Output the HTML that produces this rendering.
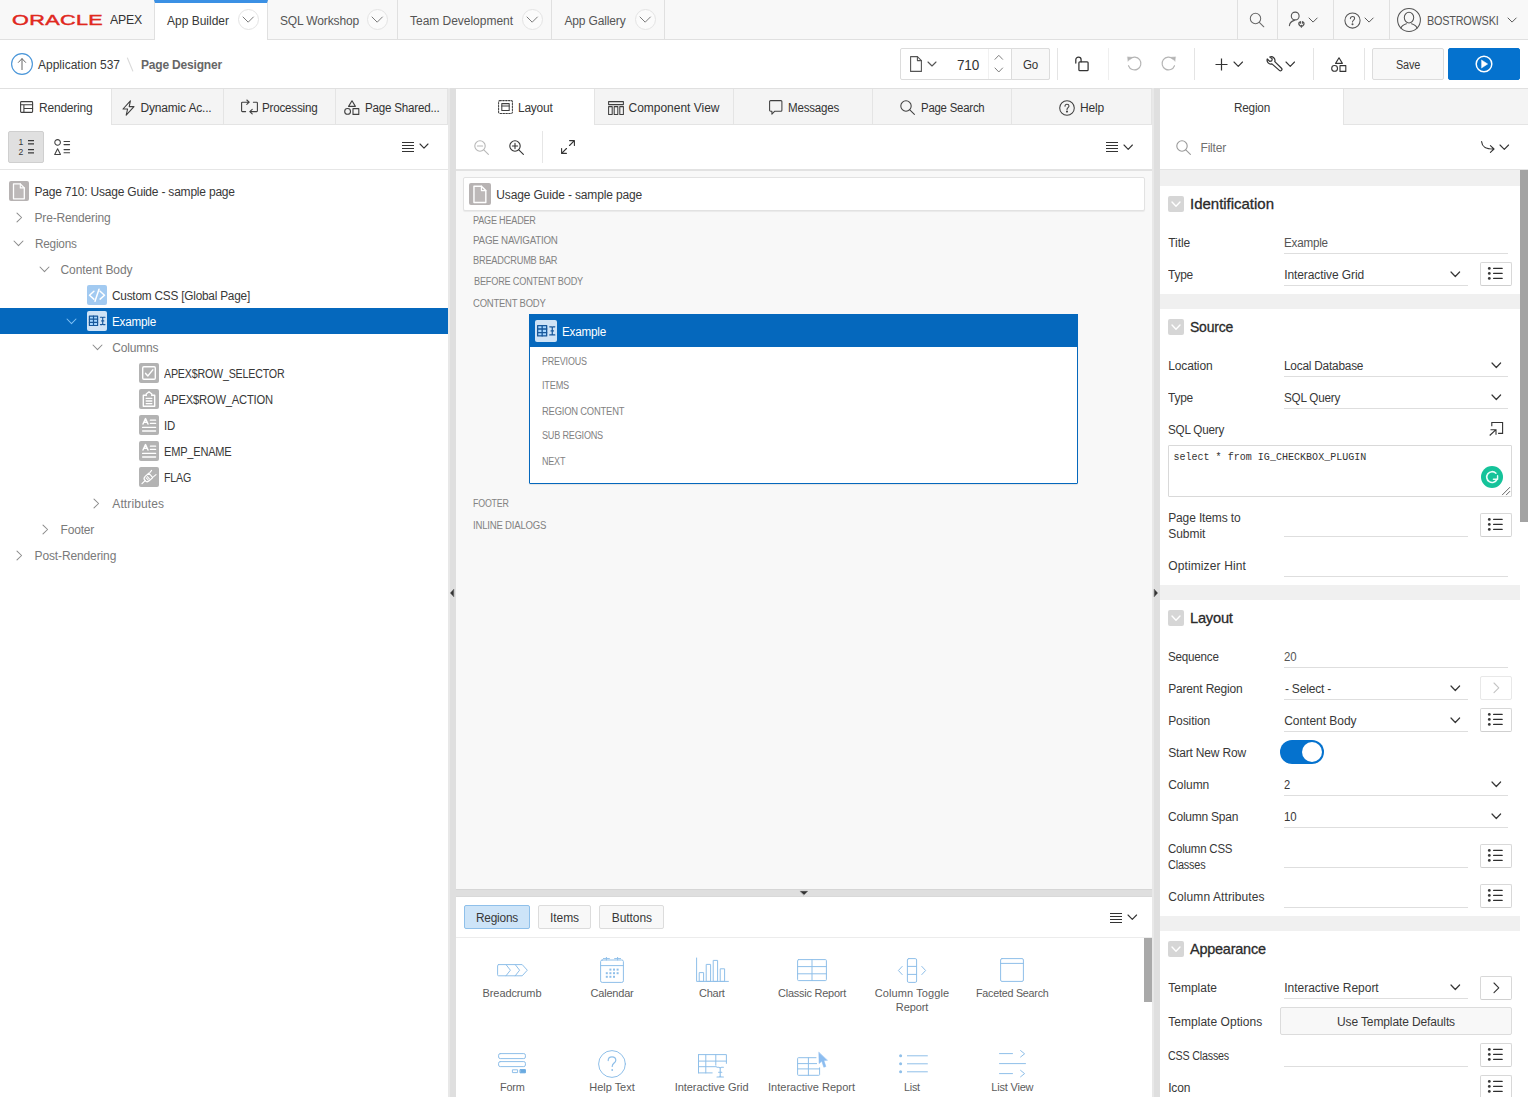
<!DOCTYPE html>
<html lang="en">
<head>
<meta charset="utf-8">
<title>Page Designer</title>
<style>
*{box-sizing:border-box;margin:0;padding:0}
html,body{width:1528px;height:1097px;overflow:hidden;background:#fff}
body{font-family:"Liberation Sans",sans-serif;font-size:12px;color:#333;position:relative}
.abs,.t,svg.i{position:absolute}
.t{white-space:pre;display:block}
svg.i{overflow:visible;fill:none;stroke:#404040;stroke-width:1.1;stroke-linecap:round;stroke-linejoin:round}
.box{position:absolute}
#hdr{left:0;top:0;width:1528px;height:40px;background:#f8f8f8;border-bottom:1px solid #e0e0e0}
.vsep{position:absolute;width:1px;background:#e0e0e0}
.hsep{position:absolute;height:1px;background:#e0e0e0}
.circ{position:absolute;border:1px solid #e0e0e0;border-radius:50%}
#tb{left:0;top:40px;width:1528px;height:48px;background:#fff}
.btn{position:absolute;border:1px solid #dcdcdc;border-radius:2px;background:#f8f8f8}
.panel{position:absolute;top:88px;height:1009px;background:#fff;overflow:hidden}
.tabs{position:absolute;left:0;top:0;height:37px;background:#f4f4f4;border-top:1px solid #e0e0e0;border-bottom:1px solid #e4e4e4}
.tab{position:absolute;top:0;height:35px;border-right:1px solid #e4e4e4}
.tab.on{background:#fff;height:36px;border-right:1px solid #e4e4e4}
.split{position:absolute;top:88px;width:8px;height:1009px;background:#dfdfdf;border-left:2px solid #e8e8e8}
.ico20{position:absolute;width:20px;height:20px;border-radius:2px;background:#b9b9b9}
.ico20 svg{position:absolute;left:0;top:0;width:20px;height:20px;fill:none;stroke:#fff;stroke-width:1.2;stroke-linejoin:round;stroke-linecap:round}
.sec{position:absolute;left:0;width:360px;background:#fff}
.tog{position:absolute;left:8px;width:16px;height:16px;border-radius:2px;background:#d6d6d6}
.ul{position:absolute;height:1px;background:#dedede}
.lb{position:absolute;width:32px;height:24px;border:1px solid #d8d8d8;border-bottom-color:#cfcfcf;border-radius:2px;background:#fff}
</style>
</head>
<body>
<header id="hdr" class="abs">
<span class="t" style="left:12.0px;top:11.0px;font-size:14.5px;line-height:18px;color:#e0281e;letter-spacing:0.000px;transform-origin:0 50%;transform:scaleX(1.49);letter-spacing:0.25px;-webkit-text-stroke:0.45px #e0281e;">ORACLE</span>
<span class="t" style="left:110.0px;top:10.5px;font-size:13px;line-height:18px;color:#333;letter-spacing:-0.220px;transform-origin:0 50%;transform:scaleX(0.9465);">APEX</span>
<div class="box" style="left:154px;top:0px;width:114px;height:40px;background:#fff;border-left:1px solid #e0e0e0;border-right:1px solid #e0e0e0;border-top:3px solid #3b90e4"></div>
<span class="t" style="left:167.0px;top:12.5px;font-size:12px;line-height:16px;color:#383838;letter-spacing:-0.004px;">App Builder</span>
<span class="t" style="left:280.0px;top:12.5px;font-size:12px;line-height:16px;color:#555;letter-spacing:-0.142px;">SQL Workshop</span>
<div class="vsep" style="left:397px;top:0;height:39px"></div>
<span class="t" style="left:410.0px;top:12.5px;font-size:12px;line-height:16px;color:#555;letter-spacing:-0.024px;">Team Development</span>
<div class="vsep" style="left:551px;top:0;height:39px"></div>
<span class="t" style="left:564.5px;top:12.5px;font-size:12px;line-height:16px;color:#555;letter-spacing:-0.155px;">App Gallery</span>
<div class="vsep" style="left:664px;top:0;height:39px"></div>
<div class="circ" style="left:237.5px;top:8.8px;width:21px;height:21px;background:#fff;border-color:#e4e4e4"></div>
<svg class="i" style="left:243.2px;top:16.6px;stroke:#7a7a7a;stroke-width:1;" width="10.4" height="5.2" viewBox="0 0 10.4 5.2"><path d="M0 0L5.2 5.2L10.4 0"/></svg>
<div class="circ" style="left:366.5px;top:8.8px;width:21px;height:21px;background:#fbfbfb;border-color:#e4e4e4"></div>
<svg class="i" style="left:372.2px;top:16.6px;stroke:#7a7a7a;stroke-width:1;" width="10.4" height="5.2" viewBox="0 0 10.4 5.2"><path d="M0 0L5.2 5.2L10.4 0"/></svg>
<div class="circ" style="left:521.5px;top:8.8px;width:21px;height:21px;background:#fbfbfb;border-color:#e4e4e4"></div>
<svg class="i" style="left:527.2px;top:16.6px;stroke:#7a7a7a;stroke-width:1;" width="10.4" height="5.2" viewBox="0 0 10.4 5.2"><path d="M0 0L5.2 5.2L10.4 0"/></svg>
<div class="circ" style="left:634.5px;top:8.8px;width:21px;height:21px;background:#fbfbfb;border-color:#e4e4e4"></div>
<svg class="i" style="left:640.2px;top:16.6px;stroke:#7a7a7a;stroke-width:1;" width="10.4" height="5.2" viewBox="0 0 10.4 5.2"><path d="M0 0L5.2 5.2L10.4 0"/></svg>
<div class="vsep" style="left:1237px;top:0;height:39px"></div>
<div class="vsep" style="left:1277px;top:0;height:39px"></div>
<div class="vsep" style="left:1333px;top:0;height:39px"></div>
<div class="vsep" style="left:1389px;top:0;height:39px"></div>
<svg class="i" style="left:1249px;top:12px;stroke:#6a6a6a;stroke-width:1.05;" width="16" height="16" viewBox="0 0 16 16"><circle cx="6.5" cy="6.5" r="5.2"/><path d="M10.3 10.3L14.8 14.8"/></svg>
<svg class="i" style="left:1288px;top:11px;stroke:#555;stroke-width:1.1;" width="19" height="18" viewBox="0 0 19 18"><circle cx="7.2" cy="5" r="3.9"/><path d="M1.4 14.6c0.4-2.8 2.4-4.6 5-5.2"/><path d="M11.4 11.2a2.5 2.5 0 1 0 4 0M12.4 10.6v1.6M14.4 10.6v1.6M13.4 14.4v1.8" stroke-width="1.2"/></svg>
<svg class="i" style="left:1308.9px;top:17.75px;stroke:#5a5a5a;stroke-width:1;" width="8.2" height="4.1" viewBox="0 0 8.2 4.1"><path d="M0 0L4.1 4.1L8.2 0"/></svg>
<svg class="i" style="left:1344px;top:11.5px;stroke:#555;stroke-width:1.05;" width="17" height="17" viewBox="0 0 17 17"><circle cx="8.5" cy="8.5" r="7.6"/><path d="M6.4 6.6c0-1.3 0.9-2.1 2.1-2.1s2.1 0.8 2.1 1.9c0 1.6-2.1 1.8-2.1 3.6"/><circle cx="8.5" cy="12.3" r="0.5" fill="#555"/></svg>
<svg class="i" style="left:1364.9px;top:17.75px;stroke:#5a5a5a;stroke-width:1;" width="8.2" height="4.1" viewBox="0 0 8.2 4.1"><path d="M0 0L4.1 4.1L8.2 0"/></svg>
<svg class="i" style="left:1397px;top:8px;stroke:#555;stroke-width:1.05;" width="24" height="24" viewBox="0 0 24 24"><circle cx="12" cy="12" r="11.4"/><ellipse cx="12" cy="9.6" rx="4.7" ry="5.3"/><path d="M4 20.2c0.6-2.4 2.6-3.4 5.4-4.4M20 20.2c-0.6-2.4-2.6-3.4-5.4-4.4"/></svg>
<span class="t" style="left:1427.0px;top:12.5px;font-size:12px;line-height:16px;color:#555;letter-spacing:-0.220px;transform-origin:0 50%;transform:scaleX(0.9034);">BOSTROWSKI</span>
<svg class="i" style="left:1507.9px;top:17.75px;stroke:#5a5a5a;stroke-width:1;" width="8.2" height="4.1" viewBox="0 0 8.2 4.1"><path d="M0 0L4.1 4.1L8.2 0"/></svg>
</header>
<div id="tb" class="abs">
<svg class="i" style="left:10.8px;top:13px;stroke-width:1.1;" width="22" height="22" viewBox="0 0 22 22"><circle cx="11" cy="11" r="10.4" stroke="#4a96d9" stroke-width="1.15"/><path d="M11 16.6V5.8M7.4 9.4L11 5.6L14.6 9.4" stroke="#666" stroke-width="1"/></svg>
<span class="t" style="left:38.0px;top:16.5px;font-size:12px;line-height:16px;color:#383838;letter-spacing:-0.004px;">Application 537</span>
<svg class="i" style="left:126px;top:17px;stroke:#dadada;stroke-width:1.1;" width="8" height="15" viewBox="0 0 8 15"><path d="M1.4 1L6.8 14"/></svg>
<span class="t" style="left:141.0px;top:16.5px;font-size:12px;line-height:16px;color:#666;letter-spacing:-0.183px;font-weight:700;">Page Designer</span>
<div class="btn" style="left:900px;top:8px;width:150px;height:32px;background:#fff"></div>
<div class="btn" style="left:1011px;top:8px;width:39px;height:32px;border-radius:0 2px 2px 0"></div>
<div class="vsep" style="left:988px;top:9px;height:30px;background:#f1f1f1"></div>
<svg class="i" style="left:910px;top:16px;stroke:#555;stroke-width:1.1;" width="12" height="16" viewBox="0 0 12 16"><path d="M0.6 0.6H7.4L11.4 4.6V15.4H0.6Z"/><path d="M7.4 0.6V4.6H11.4"/></svg>
<svg class="i" style="left:928.0px;top:22.0px;stroke:#555;stroke-width:1.1;" width="8" height="4" viewBox="0 0 8 4"><path d="M0 0L4.0 4L8 0"/></svg>
<span class="t" style="left:956.5px;top:15.5px;font-size:14px;line-height:18px;color:#333;letter-spacing:-0.220px;transform-origin:0 50%;transform:scaleX(0.9692);">710</span>
<svg class="i" style="left:995.2px;top:15.2px;stroke:#808080;stroke-width:1;" width="7.6" height="4.3" viewBox="0 0 7.6 4.3"><path d="M0 4.3L3.8 0.3L7.6 4.3"/></svg>
<svg class="i" style="left:995.2px;top:28.3px;stroke:#808080;stroke-width:1;" width="7.6" height="4.3" viewBox="0 0 7.6 4.3"><path d="M0 0L3.8 4L7.6 0"/></svg>
<span class="t" style="left:1023.0px;top:16.5px;font-size:12px;line-height:16px;color:#333;letter-spacing:-0.220px;transform-origin:0 50%;transform:scaleX(0.9630);">Go</span>
<div class="vsep" style="left:1057px;top:8px;height:32px;background:#e4e4e4"></div>
<div class="vsep" style="left:1108px;top:8px;height:32px;background:#efefef"></div>
<div class="vsep" style="left:1194px;top:8px;height:32px;background:#e4e4e4"></div>
<div class="vsep" style="left:1313px;top:8px;height:32px;background:#e4e4e4"></div>
<div class="vsep" style="left:1364px;top:8px;height:32px;background:#e4e4e4"></div>
<svg class="i" style="left:1074.5px;top:16px;stroke:#333;stroke-width:1.25;" width="14" height="16" viewBox="0 0 14 16"><rect x="3.9" y="5.8" width="9.2" height="8.9" rx="1"/><path d="M0.8 7V3.7a2.65 2.65 0 0 1 5.3 0V5.8"/></svg>
<svg class="i" style="left:1126.5px;top:16.4px;stroke:#b4b4b4;stroke-width:1.15;" width="15" height="15" viewBox="0 0 15 15"><path d="M2.97 2.97A6.4 6.4 0 1 1 1.49 9.69"/><path d="M0.7 0.9L4.9 1.3L1.2 5.1Z" fill="#b4b4b4" stroke-width="0.5"/></svg>
<svg class="i" style="left:1161.3px;top:16.4px;stroke:#b4b4b4;stroke-width:1.15;" width="15" height="15" viewBox="0 0 15 15"><path d="M12.03 2.97A6.4 6.4 0 1 0 13.51 9.69"/><path d="M14.3 0.9L10.1 1.3L13.8 5.1Z" fill="#b4b4b4" stroke-width="0.5"/></svg>
<svg class="i" style="left:1215px;top:17.5px;stroke:#333;stroke-width:1.2;stroke-linecap:butt;" width="13" height="13" viewBox="0 0 13 13"><path d="M6.5 0.5V12.5M0.5 6.5H12.5"/></svg>
<svg class="i" style="left:1233.75px;top:21.85px;stroke:#333;stroke-width:1.1;" width="8.5" height="4.3" viewBox="0 0 8.5 4.3"><path d="M0 0L4.25 4.3L8.5 0"/></svg>
<svg class="i" style="left:1265.6px;top:15.6px;stroke:#333;stroke-width:1.15;transform:scale(1.06);transform-origin:0 0;" width="16" height="16" viewBox="0 0 16 16"><path d="M5.6 7.4a3.6 3.6 0 0 1-4.4-4.6l2.3 2.3 1.9-0.5 0.5-1.9L3.6 0.9a3.6 3.6 0 0 1 4.7 4.4l6.3 6.3a1.4 1.4 0 0 1-2 2z"/></svg>
<svg class="i" style="left:1285.75px;top:21.85px;stroke:#333;stroke-width:1.1;" width="8.5" height="4.3" viewBox="0 0 8.5 4.3"><path d="M0 0L4.25 4.3L8.5 0"/></svg>
<svg class="i" style="left:1330.5px;top:16.5px;stroke:#333;stroke-width:1.1;" width="16" height="15" viewBox="0 0 16 15"><path d="M8 0.8L11.4 6.4H4.6Z"/><circle cx="3.6" cy="11.4" r="2.9"/><rect x="9" y="8.6" width="5.8" height="5.8"/></svg>
<div class="btn" style="left:1372px;top:8px;width:72px;height:32px;"></div>
<span class="t" style="left:1396.0px;top:16.5px;font-size:12px;line-height:16px;color:#383838;letter-spacing:-0.220px;transform-origin:0 50%;transform:scaleX(0.9064);">Save</span>
<div class="btn" style="left:1448px;top:8px;width:72px;height:32px;background:#0572ce;border-color:#0572ce"></div>
<svg class="i" style="left:1475px;top:15px;stroke:#fff;stroke-width:1.5;" width="18" height="18" viewBox="0 0 18 18"><circle cx="9" cy="9" r="7.8"/><path d="M6.8 5.2L12.6 9L6.8 12.8Z" fill="#fff" stroke-width="0.6"/></svg>
</div><nav class="panel" style="left:0;width:448px">
<div class="tabs" style="width:448px">
<div class="tab on" style="left:0;width:112px"></div>
<div class="tab" style="left:112px;width:112px"></div>
<div class="tab" style="left:224px;width:112px"></div>
<div class="tab" style="left:336px;width:112px"></div>
</div>
<svg class="i" style="left:19.5px;top:13px;stroke:#404040;stroke-width:1.1;" width="13" height="12" viewBox="0 0 13 12"><rect x="0.6" y="0.6" width="12" height="10.8" rx="0.8"/><path d="M0.6 3.7H12.6M3.9 3.7V11.4M3.9 7.5H12.6"/></svg>
<span class="t" style="left:39.0px;top:11.5px;font-size:12px;line-height:16px;color:#383838;letter-spacing:-0.208px;">Rendering</span>
<svg class="i" style="left:121.5px;top:11.5px;stroke:#404040;stroke-width:1.1;" width="13" height="16" viewBox="0 0 13 16"><path d="M8.4 0.8L1 9h4.6L4.2 15.2L12 6.6H7.2Z"/></svg>
<span class="t" style="left:140.5px;top:11.5px;font-size:12px;line-height:16px;color:#333;letter-spacing:-0.181px;">Dynamic Ac...</span>
<svg class="i" style="left:240.5px;top:12px;stroke:#404040;stroke-width:1.1;" width="17" height="14" viewBox="0 0 17 14"><path d="M4.6 11.6H1.4a0.8 0.8 0 0 1-0.8-0.8V3a0.8 0.8 0 0 1 0.8-0.8H8.2M5.8 0L8.2 2.2L5.8 4.4"/><path d="M12.4 2.2h3.2a0.8 0.8 0 0 1 0.8 0.8v7.8a0.8 0.8 0 0 1-0.8 0.8H8.8M11.2 9.4L8.8 11.6L11.2 13.8"/></svg>
<span class="t" style="left:262.0px;top:11.5px;font-size:12px;line-height:16px;color:#333;letter-spacing:-0.220px;transform-origin:0 50%;transform:scaleX(0.9707);">Processing</span>
<svg class="i" style="left:344px;top:11.5px;stroke:#404040;stroke-width:1.1;" width="16" height="15" viewBox="0 0 16 15"><path d="M8 0.8L11.4 6.4H4.6Z"/><circle cx="3.6" cy="11.4" r="2.9"/><rect x="9" y="8.6" width="5.8" height="5.8"/></svg>
<span class="t" style="left:364.5px;top:11.5px;font-size:12px;line-height:16px;color:#333;letter-spacing:-0.220px;transform-origin:0 50%;transform:scaleX(0.9678);">Page Shared...</span>
<div class="box" style="left:8px;top:43px;width:36px;height:32px;background:#e0e0e0;border:1px solid #cfcfcf;border-radius:2px"></div>
<span class="t" style="left:18.6px;top:49.3px;font-size:8.6px;line-height:10px;color:#383838;letter-spacing:0.000px;">1</span>
<span class="t" style="left:18.6px;top:58.5px;font-size:8.6px;line-height:10px;color:#383838;letter-spacing:0.000px;">2</span>
<svg class="i" style="left:27.8px;top:52px;stroke:#383838;stroke-width:1.3;stroke-linecap:butt;" width="7" height="14" viewBox="0 0 7 14"><path d="M0 0.6H6M0 3.8H6M0 9.7H6M0 12.9H6"/></svg>
<svg class="i" style="left:54px;top:51px;stroke:#404040;stroke-width:1.05;" width="16" height="16" viewBox="0 0 16 16"><circle cx="3.6" cy="3.4" r="2.8"/><path d="M3.6 9.8L6.5 15.4H0.7Z"/><path d="M10 2.4H15.6M10 5.6H15.6M10 10.6H15.6M10 13.8H15.6"/></svg>
<svg class="i" style="left:402px;top:54px;stroke:#333;stroke-width:1;stroke-linecap:butt;" width="12" height="10" viewBox="0 0 12 10"><path d="M0 0.5H12M0 3.5H12M0 6.5H12M0 9.5H12"/></svg>
<svg class="i" style="left:420.0px;top:56.4px;stroke:#333;stroke-width:1.1;" width="8" height="4.2" viewBox="0 0 8 4.2"><path d="M0 0L4.0 4.2L8 0"/></svg>
<div class="hsep" style="left:0;top:81px;width:448px;background:#e6e6e6"></div>
<div class="ico20" style="left:9px;top:93px;background:#b7b3b3"><svg viewBox="0 0 20 20" style="stroke:#fff"><path d="M4.5 2.9H11.3L15.3 6.9V17.8H4.5Z" fill="#bdb9b9" stroke-width="1.3"/><path d="M11.3 2.9V6.9H15.3" stroke-width="1.1"/></svg></div>
<span class="t" style="left:34.5px;top:95.5px;font-size:12px;line-height:16px;color:#383838;letter-spacing:-0.205px;">Page 710: Usage Guide - sample page</span>
<svg class="i" style="left:16.5px;top:125.0px;stroke:#8c8c8c;stroke-width:1.05;" width="4.6" height="9" viewBox="0 0 4.6 9"><path d="M0 0L4.6 4.5L0 9"/></svg>
<span class="t" style="left:34.5px;top:121.5px;font-size:12px;line-height:16px;color:#7a7a7a;letter-spacing:-0.157px;">Pre-Rendering</span>
<svg class="i" style="left:14.3px;top:153.2px;stroke:#8c8c8c;stroke-width:1.05;" width="9" height="4.6" viewBox="0 0 9 4.6"><path d="M0 0L4.5 4.6L9 0"/></svg>
<span class="t" style="left:34.5px;top:147.5px;font-size:12px;line-height:16px;color:#7a7a7a;letter-spacing:-0.220px;transform-origin:0 50%;transform:scaleX(0.9814);">Regions</span>
<svg class="i" style="left:40.3px;top:179.2px;stroke:#8c8c8c;stroke-width:1.05;" width="9" height="4.6" viewBox="0 0 9 4.6"><path d="M0 0L4.5 4.6L9 0"/></svg>
<span class="t" style="left:60.5px;top:173.5px;font-size:12px;line-height:16px;color:#7a7a7a;letter-spacing:-0.060px;">Content Body</span>
<div class="ico20" style="left:87px;top:197px;background:#a2caf1"><svg viewBox="0 0 20 20" style="stroke:#fff"><path d="M6.9 6.3L2.5 10.2L6.9 14.1M13.1 6.3L17.5 10.2L13.1 14.1M12 4.2L8 16.2" stroke-width="1.5"/></svg></div>
<span class="t" style="left:112.3px;top:199.5px;font-size:12px;line-height:16px;color:#383838;letter-spacing:-0.220px;transform-origin:0 50%;transform:scaleX(0.9848);">Custom CSS [Global Page]</span>
<div class="box" style="left:0px;top:220px;width:448px;height:26px;background:#0568bd"></div>
<svg class="i" style="left:66.5px;top:231.2px;stroke:#7fc0f5;stroke-width:1.05;" width="9" height="4.6" viewBox="0 0 9 4.6"><path d="M0 0L4.5 4.6L9 0"/></svg>
<div class="ico20" style="left:87px;top:223px;background:#cfe3f6"><svg viewBox="0 0 20 20" style="stroke:#17579a"><rect x="2.4" y="5.1" width="8.2" height="9.4" fill="#a6d6ff" stroke-width="1.2"/><path d="M2.4 8.2H10.6M2.4 11.4H10.6M6.5 5.1V14.5" stroke-width="1.2"/><path d="M13.4 6.2H14.9Q15.7 6.2 15.7 7Q15.7 6.2 16.5 6.2H18M13.4 13.6H14.9Q15.7 13.6 15.7 12.8Q15.7 13.6 16.5 13.6H18M15.7 7V12.8M14.6 9.9H16.8" stroke-width="1.1"/></svg></div>
<span class="t" style="left:112.3px;top:225.5px;font-size:12px;line-height:16px;color:#fff;letter-spacing:-0.220px;transform-origin:0 50%;transform:scaleX(0.9746);">Example</span>
<svg class="i" style="left:92.5px;top:257.2px;stroke:#8c8c8c;stroke-width:1.05;" width="9" height="4.6" viewBox="0 0 9 4.6"><path d="M0 0L4.5 4.6L9 0"/></svg>
<span class="t" style="left:112.3px;top:251.5px;font-size:12px;line-height:16px;color:#7a7a7a;letter-spacing:-0.194px;">Columns</span>
<div class="ico20" style="left:139px;top:275px;background:#b3b3b3"><svg viewBox="0 0 20 20" style="stroke:#fff"><rect x="3.7" y="3.7" width="12.6" height="12.6" rx="1.2" stroke-width="1.4"/><path d="M6.6 10.4L8.9 12.9L13.8 6.9" stroke-width="1.5"/></svg></div>
<span class="t" style="left:164.2px;top:277.5px;font-size:12px;line-height:16px;color:#383838;letter-spacing:-0.220px;transform-origin:0 50%;transform:scaleX(0.8898);">APEX$ROW_SELECTOR</span>
<div class="ico20" style="left:139px;top:301px;background:#b3b3b3"><svg viewBox="0 0 20 20" style="stroke:#fff"><path d="M7.2 6.2H4.3V17.2H15.7V6.2H12.8" stroke-width="1.4"/><path d="M7.2 6.6V5L10 2.8L12.8 5V6.6" stroke-width="1.3"/><path d="M7.2 9.4H12.8M7.2 12H12.8M7.2 14.6H12.8" stroke-width="1.3"/></svg></div>
<span class="t" style="left:164.2px;top:303.5px;font-size:12px;line-height:16px;color:#383838;letter-spacing:-0.220px;transform-origin:0 50%;transform:scaleX(0.9321);">APEX$ROW_ACTION</span>
<div class="ico20" style="left:139px;top:327px;background:#b3b3b3"><svg viewBox="0 0 20 20" style="stroke:#fff"><path d="M4 9L6.5 3.6L9 9M4.9 7.2H8.1" stroke-width="1.5"/><path d="M11.4 5.2H16.6M11.4 8.4H16.6M3.6 12.4H16.6M3.6 16H16.6" stroke-width="1.3"/></svg></div>
<span class="t" style="left:164.2px;top:329.5px;font-size:12px;line-height:16px;color:#383838;letter-spacing:-0.220px;transform-origin:0 50%;transform:scaleX(0.9516);">ID</span>
<div class="ico20" style="left:139px;top:353px;background:#b3b3b3"><svg viewBox="0 0 20 20" style="stroke:#fff"><path d="M4 9L6.5 3.6L9 9M4.9 7.2H8.1" stroke-width="1.5"/><path d="M11.4 5.2H16.6M11.4 8.4H16.6M3.6 12.4H16.6M3.6 16H16.6" stroke-width="1.3"/></svg></div>
<span class="t" style="left:164.2px;top:355.5px;font-size:12px;line-height:16px;color:#383838;letter-spacing:-0.220px;transform-origin:0 50%;transform:scaleX(0.9199);">EMP_ENAME</span>
<div class="ico20" style="left:139px;top:379px;background:#b3b3b3"><svg viewBox="0 0 20 20" style="stroke:#fff"><path d="M3 16.6L6.4 13.4" stroke-width="1.3"/><path d="M6.2 9.4L9.8 6.2L13.8 10.6L10.2 13.8a2.8 2.8 0 0 1-4-4.4z" stroke-width="1.2"/><path d="M10.8 5.6L12.6 3.4M14.6 9.6L17 7.6M8.4 9.6L10.4 11.8M7.2 10.8L9.2 13" stroke-width="1.1"/></svg></div>
<span class="t" style="left:164.2px;top:381.5px;font-size:12px;line-height:16px;color:#383838;letter-spacing:-0.220px;transform-origin:0 50%;transform:scaleX(0.8863);">FLAG</span>
<svg class="i" style="left:94.3px;top:411.0px;stroke:#8c8c8c;stroke-width:1.05;" width="4.6" height="9" viewBox="0 0 4.6 9"><path d="M0 0L4.6 4.5L0 9"/></svg>
<span class="t" style="left:112.3px;top:407.5px;font-size:12px;line-height:16px;color:#7a7a7a;letter-spacing:0.110px;">Attributes</span>
<svg class="i" style="left:42.5px;top:437.0px;stroke:#8c8c8c;stroke-width:1.05;" width="4.6" height="9" viewBox="0 0 4.6 9"><path d="M0 0L4.6 4.5L0 9"/></svg>
<span class="t" style="left:60.5px;top:433.5px;font-size:12px;line-height:16px;color:#7a7a7a;letter-spacing:-0.165px;">Footer</span>
<svg class="i" style="left:16.5px;top:463.0px;stroke:#8c8c8c;stroke-width:1.05;" width="4.6" height="9" viewBox="0 0 4.6 9"><path d="M0 0L4.6 4.5L0 9"/></svg>
<span class="t" style="left:34.5px;top:459.5px;font-size:12px;line-height:16px;color:#7a7a7a;letter-spacing:-0.121px;">Post-Rendering</span>
</nav>
<div class="split" style="left:448px"></div>
<svg class="i" style="left:449.6px;top:589.2px;stroke:#333;stroke-width:0.4;" width="4" height="7.6" viewBox="0 0 4 7.6"><path d="M3.6 0.4L0.4 4L3.6 7.6Z" fill="#333"/></svg><main class="panel" style="left:456px;width:696px;background:#f8f8f8">
<div class="tabs" style="width:696px">
<div class="tab on" style="left:0;width:139px"></div>
<div class="tab" style="left:139px;width:139px"></div>
<div class="tab" style="left:278px;width:139px"></div>
<div class="tab" style="left:417px;width:139px"></div>
<div class="tab" style="left:556px;width:140px"></div>
</div>
<svg class="i" style="left:42px;top:12px;stroke:#404040;stroke-width:1.05;" width="15" height="14" viewBox="0 0 15 14"><rect x="0.6" y="0.6" width="13.8" height="12.8" rx="1.2" stroke-dasharray="1.6 1.3"/><rect x="3.8" y="3.6" width="7.4" height="6.8"/><path d="M3.8 6H11.2"/></svg>
<span class="t" style="left:62.0px;top:11.5px;font-size:12px;line-height:16px;color:#383838;letter-spacing:-0.220px;transform-origin:0 50%;transform:scaleX(0.9939);">Layout</span>
<svg class="i" style="left:152px;top:12.5px;stroke:#404040;stroke-width:1.05;" width="16" height="14" viewBox="0 0 16 14"><rect x="0.6" y="0.6" width="14.8" height="3"/><rect x="0.6" y="5.6" width="3.6" height="7.8"/><rect x="6.2" y="5.6" width="3.6" height="7.8"/><rect x="11.8" y="5.6" width="3.6" height="7.8"/></svg>
<span class="t" style="left:172.5px;top:11.5px;font-size:12px;line-height:16px;color:#333;letter-spacing:-0.012px;">Component View</span>
<svg class="i" style="left:313px;top:12px;stroke:#404040;stroke-width:1.05;" width="14" height="15" viewBox="0 0 14 15"><path d="M1.6 0.6H11.9a1 1 0 0 1 1 1V10.2a1 1 0 0 1-1 1H5.8L2.9 14.2V11.2H1.6a1 1 0 0 1-1-1V1.6a1 1 0 0 1 1-1z"/></svg>
<span class="t" style="left:331.5px;top:11.5px;font-size:12px;line-height:16px;color:#333;letter-spacing:-0.220px;transform-origin:0 50%;transform:scaleX(0.9633);">Messages</span>
<svg class="i" style="left:444px;top:12px;stroke:#404040;stroke-width:1.05;" width="15" height="15" viewBox="0 0 15 15"><circle cx="6" cy="6" r="5.2"/><path d="M9.8 9.8L14.4 14.4"/></svg>
<span class="t" style="left:464.5px;top:11.5px;font-size:12px;line-height:16px;color:#333;letter-spacing:-0.220px;transform-origin:0 50%;transform:scaleX(0.9482);">Page Search</span>
<svg class="i" style="left:603px;top:11.5px;stroke:#404040;stroke-width:1.05;" width="16" height="16" viewBox="0 0 16 16"><circle cx="8" cy="8" r="7.3"/><path d="M6 6.2c0-1.2 0.9-2 2-2s2 0.8 2 1.8c0 1.5-2 1.7-2 3.4"/><circle cx="8" cy="11.6" r="0.5" fill="#404040"/></svg>
<span class="t" style="left:624.0px;top:11.5px;font-size:12px;line-height:16px;color:#333;letter-spacing:-0.172px;">Help</span>
<div class="box" style="left:0px;top:37px;width:696px;height:44px;background:#fff"></div>
<div class="hsep" style="left:0;top:81px;width:696px;background:#e2e2e2;height:1.5px"></div>
<svg class="i" style="left:18px;top:51.5px;stroke:#b8b8b8;stroke-width:1.1;" width="15" height="15" viewBox="0 0 15 15"><circle cx="6" cy="6" r="5.2"/><path d="M9.8 9.8L14.4 14.4M3.4 6H8.6"/></svg>
<svg class="i" style="left:53px;top:51.5px;stroke:#333;stroke-width:1.1;" width="15" height="15" viewBox="0 0 15 15"><circle cx="6" cy="6" r="5.2"/><path d="M9.8 9.8L14.4 14.4M3.4 6H8.6M6 3.4V8.6"/></svg>
<div class="vsep" style="left:86px;top:43px;height:32px;background:#e6e6e6"></div>
<svg class="i" style="left:105px;top:52px;stroke:#333;stroke-width:1.1;" width="14" height="14" viewBox="0 0 14 14"><path d="M8.6 0.6H13.4V5.4M13.4 0.6L8.5 5.5M5.4 13.4H0.6V8.6M0.6 13.4L5.5 8.5"/></svg>
<svg class="i" style="left:650px;top:54px;stroke:#333;stroke-width:1;stroke-linecap:butt;" width="12" height="10" viewBox="0 0 12 10"><path d="M0 0.5H12M0 3.5H12M0 6.5H12M0 9.5H12"/></svg>
<svg class="i" style="left:667.8px;top:56.5px;stroke:#333;stroke-width:1.1;" width="8.4" height="4.4" viewBox="0 0 8.4 4.4"><path d="M0 0L4.2 4.4L8.4 0"/></svg>
<div class="box" style="left:7px;top:89px;width:682px;height:34px;background:#fff;border:1px solid #e2e2e2;border-radius:2px;box-shadow:0 1px 1px rgba(0,0,0,.06)"></div>
<div class="ico20" style="left:13px;top:95px;width:22px;height:22px;background:#b7b3b3"><svg viewBox="0 0 20 20" style="width:22px;height:22px"><path d="M4.5 2.9H11.3L15.3 6.9V17.8H4.5Z" fill="#bdb9b9" stroke-width="1.3"/><path d="M11.3 2.9V6.9H15.3" stroke-width="1.1"/></svg></div>
<span class="t" style="left:40.3px;top:99.0px;font-size:12px;line-height:16px;color:#383838;letter-spacing:-0.149px;">Usage Guide - sample page</span>
<span class="t" style="left:16.5px;top:126.5px;font-size:10px;line-height:12px;color:#828282;letter-spacing:-0.220px;transform-origin:0 50%;transform:scaleX(0.9076);">PAGE HEADER</span>
<span class="t" style="left:16.5px;top:146.5px;font-size:10px;line-height:12px;color:#828282;letter-spacing:-0.220px;transform-origin:0 50%;transform:scaleX(0.9768);">PAGE NAVIGATION</span>
<span class="t" style="left:16.5px;top:166.5px;font-size:10px;line-height:12px;color:#828282;letter-spacing:-0.220px;transform-origin:0 50%;transform:scaleX(0.9224);">BREADCRUMB BAR</span>
<span class="t" style="left:17.5px;top:187.5px;font-size:10px;line-height:12px;color:#828282;letter-spacing:-0.220px;transform-origin:0 50%;transform:scaleX(0.9160);">BEFORE CONTENT BODY</span>
<span class="t" style="left:17.2px;top:209.5px;font-size:10px;line-height:12px;color:#828282;letter-spacing:-0.220px;transform-origin:0 50%;transform:scaleX(0.9473);">CONTENT BODY</span>
<span class="t" style="left:17.4px;top:409.5px;font-size:10px;line-height:12px;color:#828282;letter-spacing:-0.220px;transform-origin:0 50%;transform:scaleX(0.8847);">FOOTER</span>
<span class="t" style="left:17.0px;top:432.0px;font-size:10px;line-height:12px;color:#828282;letter-spacing:-0.220px;transform-origin:0 50%;transform:scaleX(0.9583);">INLINE DIALOGS</span>
<div class="box" style="left:73px;top:226px;width:549px;height:170px;background:#fff;border:1px solid #0568bd;border-radius:1px;box-shadow:0 1px 1px rgba(0,0,0,.08)"></div>
<div class="box" style="left:73px;top:226px;width:549px;height:33px;background:#0568bd"></div>
<div class="ico20" style="left:79px;top:232px;width:22px;height:22px;background:#cfe3f6"><svg viewBox="0 0 20 20" style="stroke:#17579a;width:22px;height:22px"><rect x="2.4" y="5.1" width="8.2" height="9.4" fill="#a6d6ff" stroke-width="1.2"/><path d="M2.4 8.2H10.6M2.4 11.4H10.6M6.5 5.1V14.5" stroke-width="1.2"/><path d="M13.4 6.2H14.9Q15.7 6.2 15.7 7Q15.7 6.2 16.5 6.2H18M13.4 13.6H14.9Q15.7 13.6 15.7 12.8Q15.7 13.6 16.5 13.6H18M15.7 7V12.8M14.6 9.9H16.8" stroke-width="1.1"/></svg></div>
<span class="t" style="left:106.3px;top:235.7px;font-size:12px;line-height:16px;color:#fff;letter-spacing:-0.220px;transform-origin:0 50%;transform:scaleX(0.9746);">Example</span>
<span class="t" style="left:86.3px;top:267.5px;font-size:10px;line-height:12px;color:#828282;letter-spacing:-0.220px;transform-origin:0 50%;transform:scaleX(0.8953);">PREVIOUS</span>
<span class="t" style="left:86.3px;top:291.5px;font-size:10px;line-height:12px;color:#828282;letter-spacing:-0.220px;transform-origin:0 50%;transform:scaleX(0.9164);">ITEMS</span>
<span class="t" style="left:86.3px;top:317.5px;font-size:10px;line-height:12px;color:#828282;letter-spacing:-0.220px;transform-origin:0 50%;transform:scaleX(0.9408);">REGION CONTENT</span>
<span class="t" style="left:86.3px;top:341.5px;font-size:10px;line-height:12px;color:#828282;letter-spacing:-0.220px;transform-origin:0 50%;transform:scaleX(0.9098);">SUB REGIONS</span>
<span class="t" style="left:86.3px;top:367.5px;font-size:10px;line-height:12px;color:#828282;letter-spacing:-0.220px;transform-origin:0 50%;transform:scaleX(0.8995);">NEXT</span>
<div class="box" style="left:0px;top:801px;width:696px;height:8px;background:#dfdfdf;border-top:1px solid #d6d6d6;border-bottom:1px solid #d9d9d9"></div>
<svg class="i" style="left:344px;top:802.5px;stroke:#333;stroke-width:0.3;" width="8" height="4" viewBox="0 0 8 4"><path d="M0.3 0.3H7.7L4 3.8Z" fill="#333"/></svg>
<div class="box" style="left:0px;top:809px;width:696px;height:200px;background:#fff"></div>
<div class="hsep" style="left:0;top:849px;width:696px;background:#ececec"></div>
<div class="btn" style="left:8px;top:817px;width:66px;height:24px;background:#cde4f8;border-color:#8fc0ea"></div>
<span class="t" style="left:20.2px;top:822.3px;font-size:12px;line-height:16px;color:#383838;letter-spacing:-0.220px;transform-origin:0 50%;transform:scaleX(0.9884);">Regions</span>
<div class="btn" style="left:82px;top:817px;width:53px;height:24px;"></div>
<span class="t" style="left:94.0px;top:822.3px;font-size:12px;line-height:16px;color:#383838;letter-spacing:-0.069px;">Items</span>
<div class="btn" style="left:143px;top:817px;width:65px;height:24px;"></div>
<span class="t" style="left:155.7px;top:822.3px;font-size:12px;line-height:16px;color:#383838;letter-spacing:-0.058px;">Buttons</span>
<svg class="i" style="left:654px;top:824.5px;stroke:#333;stroke-width:1;stroke-linecap:butt;" width="12" height="10" viewBox="0 0 12 10"><path d="M0 0.5H12M0 3.5H12M0 6.5H12M0 9.5H12"/></svg>
<svg class="i" style="left:671.7px;top:827.3px;stroke:#333;stroke-width:1.1;" width="8.6" height="4.4" viewBox="0 0 8.6 4.4"><path d="M0 0L4.3 4.4L8.6 0"/></svg>
<div class="box" style="left:688px;top:850px;width:8px;height:64px;background:#a9a9a9"></div>
<span class="t" style="left:26.6px;top:898.3px;font-size:11px;line-height:14px;color:#5c5c5c;letter-spacing:-0.112px;">Breadcrumb</span>
<span class="t" style="left:134.5px;top:898.3px;font-size:11px;line-height:14px;color:#5c5c5c;letter-spacing:-0.205px;">Calendar</span>
<span class="t" style="left:243.2px;top:898.3px;font-size:11px;line-height:14px;color:#5c5c5c;letter-spacing:-0.220px;transform-origin:0 50%;transform:scaleX(0.9959);">Chart</span>
<span class="t" style="left:322.0px;top:898.3px;font-size:11px;line-height:14px;color:#5c5c5c;letter-spacing:-0.220px;transform-origin:0 50%;transform:scaleX(0.9934);">Classic Report</span>
<span class="t" style="left:418.7px;top:898.3px;font-size:11px;line-height:14px;color:#5c5c5c;letter-spacing:0.109px;">Column Toggle</span>
<span class="t" style="left:519.8px;top:898.3px;font-size:11px;line-height:14px;color:#5c5c5c;letter-spacing:-0.220px;transform-origin:0 50%;transform:scaleX(0.9722);">Faceted Search</span>
<span class="t" style="left:439.8px;top:912.3px;font-size:11px;line-height:14px;color:#5c5c5c;letter-spacing:-0.105px;">Report</span>
<span class="t" style="left:43.8px;top:992.3px;font-size:11px;line-height:14px;color:#5c5c5c;letter-spacing:-0.220px;transform-origin:0 50%;transform:scaleX(0.9882);">Form</span>
<span class="t" style="left:133.3px;top:992.3px;font-size:11px;line-height:14px;color:#5c5c5c;letter-spacing:-0.028px;">Help Text</span>
<span class="t" style="left:218.7px;top:992.3px;font-size:11px;line-height:14px;color:#5c5c5c;letter-spacing:-0.050px;">Interactive Grid</span>
<span class="t" style="left:312.0px;top:992.3px;font-size:11px;line-height:14px;color:#5c5c5c;letter-spacing:0.010px;">Interactive Report</span>
<span class="t" style="left:448.4px;top:992.3px;font-size:11px;line-height:14px;color:#5c5c5c;letter-spacing:-0.220px;transform-origin:0 50%;transform:scaleX(0.9726);">List</span>
<span class="t" style="left:535.3px;top:992.3px;font-size:11px;line-height:14px;color:#5c5c5c;letter-spacing:-0.203px;">List View</span>
<svg class="i" style="left:40.5px;top:876px;stroke:#8fbfe9;stroke-width:1;" width="31" height="13" viewBox="0 0 31 13"><path d="M1.6 0.6H25.2L30.3 6.2L25.2 11.8H1.6a1 1 0 0 1-1-1V1.6a1 1 0 0 1 1-1z"/><path d="M9 0.6L13.4 6.2L9 11.8M18.2 0.6L22.6 6.2L18.2 11.8"/></svg>
<svg class="i" style="left:144px;top:869px;stroke:#8fbfe9;stroke-width:1;" width="24" height="26" viewBox="0 0 24 26"><rect x="0.6" y="3" width="22.8" height="22.4" rx="1.6"/><path d="M0.6 8.6H23.4M6.4 0.4V3M17.6 0.4V3M3.4 1.6H9.4M14.6 1.6H20.6" /><g fill="#8fbfe9" stroke="none"><rect x="9.4" y="11.6" width="2" height="2"/><rect x="13" y="11.6" width="2" height="2"/><rect x="16.6" y="11.6" width="2" height="2"/><rect x="5.8" y="15.2" width="2" height="2"/><rect x="9.4" y="15.2" width="2" height="2"/><rect x="13" y="15.2" width="2" height="2"/><rect x="16.6" y="15.2" width="2" height="2"/><rect x="5.8" y="18.8" width="2" height="2"/><rect x="9.4" y="18.8" width="2" height="2"/><rect x="13" y="18.8" width="2" height="2"/></g></svg>
<svg class="i" style="left:239.5px;top:870px;stroke:#8fbfe9;stroke-width:1;" width="33" height="24" viewBox="0 0 33 24"><path d="M0.6 0V23.4H32.4"/><rect x="3.6" y="14.6" width="4" height="8.8"/><rect x="10.6" y="6.4" width="4" height="17"/><rect x="17.6" y="2.4" width="4" height="21"/><rect x="24.6" y="10.8" width="4" height="12.6"/></svg>
<svg class="i" style="left:340.5px;top:870.8px;stroke:#8fbfe9;stroke-width:1;" width="30" height="22" viewBox="0 0 30 22"><rect x="0.6" y="0.6" width="28.8" height="21" rx="1"/><path d="M0.6 7.6H29.4M0.6 14.8H29.4M15 0.6V21.6"/></svg>
<svg class="i" style="left:441px;top:870px;stroke:#8fbfe9;stroke-width:1;" width="30" height="25" viewBox="0 0 30 25"><rect x="10.4" y="0.6" width="9.2" height="23.8" rx="1.4"/><path d="M10.4 8.4H19.6M10.4 16.4H19.6M5.2 8.4L1.4 12.5L5.2 16.6M24.8 8.4L28.6 12.5L24.8 16.6"/></svg>
<svg class="i" style="left:544px;top:869.8px;stroke:#8fbfe9;stroke-width:1;" width="24" height="24" viewBox="0 0 24 24"><rect x="0.6" y="0.6" width="22.8" height="22.8" rx="1.4"/><path d="M0.6 5.4H23.4"/></svg>
<svg class="i" style="left:42px;top:964.8px;stroke:#8fbfe9;stroke-width:1;" width="29" height="21" viewBox="0 0 29 21"><rect x="0.6" y="0.6" width="26.8" height="5" rx="1.6"/><rect x="0.6" y="8.6" width="26.8" height="5" rx="1.6"/><rect x="14.8" y="16.8" width="4.8" height="2.8"/><rect x="22.4" y="16.6" width="5" height="3.2" fill="#6aaae0" stroke="#6aaae0"/></svg>
<svg class="i" style="left:142px;top:961.5px;stroke:#8fbfe9;stroke-width:1;" width="28" height="28" viewBox="0 0 28 28"><circle cx="14" cy="14" r="13.4"/><path d="M10.2 10.6c0-2.4 1.6-3.8 3.8-3.8s3.8 1.4 3.8 3.4c0 2.8-3.6 3-3.6 6.2" stroke-width="1.2"/><circle cx="14.2" cy="20" r="0.9" fill="#8fbfe9" stroke="none"/></svg>
<svg class="i" style="left:241.5px;top:965.5px;stroke:#8fbfe9;stroke-width:1;" width="29" height="24" viewBox="0 0 29 24"><path d="M0.5 0.6H28.4V9.4M0.5 7.1H28.4M0.5 12.7H18.4M0.5 18.9H14.2M0.5 0.6V18.9M7.8 0.6V18.9M17.8 0.6V11.2"/><path d="M19 13.2H20.8Q22.2 13.2 22.2 14.8Q22.2 13.2 23.6 13.2H25.4M19 23H20.8Q22.2 23 22.2 21.4Q22.2 23 23.6 23H25.4M22.2 14.8V21.4M20.6 18.2H23.8" stroke-width="1.1"/></svg>
<svg class="i" style="left:341px;top:963px;stroke:#8fbfe9;stroke-width:1;" width="31" height="27" viewBox="0 0 31 27"><path d="M19 6.7H1.4a0.8 0.8 0 0 0-0.8 0.8V23.5a0.8 0.8 0 0 0 0.8 0.8H21.8a0.8 0.8 0 0 0 0.8-0.8V16.8M0.6 12.6H19.6M0.6 17.9H22.6M11.4 6.7V24.3"/><path d="M21.8 1.4L22.1 12.6L24.8 10.3L26.8 16.3L28.9 15.5L26.9 9.6L30.2 9.3Z" fill="#8cbdf0" stroke="#8cbdf0" stroke-width="0.5"/></svg>
<svg class="i" style="left:442.5px;top:966px;stroke:#8fbfe9;stroke-width:1;" width="29" height="20" viewBox="0 0 29 20"><g fill="#8fbfe9" stroke="none"><circle cx="1.6" cy="1.8" r="1.5"/><circle cx="1.6" cy="9.8" r="1.5"/><circle cx="1.6" cy="17.8" r="1.5"/></g><path d="M8.4 1.8H28.4M8.4 9.8H28.4M8.4 17.8H28.4"/></svg>
<svg class="i" style="left:543px;top:962px;stroke:#8fbfe9;stroke-width:1;" width="27" height="27" viewBox="0 0 27 27"><path d="M0.5 3.6H13.5M0.5 13.6H26.5M0.5 23.6H13.5M21.6 0.6L25.6 3.8L21.6 7M21.6 20.4L25.6 23.6L21.6 26.8"/></svg>
</main>
<div class="split" style="left:1152px"></div>
<svg class="i" style="left:1153.8px;top:589.2px;stroke:#333;stroke-width:0.4;" width="4" height="7.6" viewBox="0 0 4 7.6"><path d="M0.4 0.4L3.6 4L0.4 7.6Z" fill="#333"/></svg><aside class="panel" style="left:1160px;width:368px;background:#f0f0f0">
<div class="tabs" style="width:368px"><div class="tab on" style="left:0;width:184px"></div></div>
<span class="t" style="left:73.5px;top:11.5px;font-size:12px;line-height:16px;color:#383838;letter-spacing:-0.220px;transform-origin:0 50%;transform:scaleX(0.9806);">Region</span>
<div class="box" style="left:0px;top:37px;width:368px;height:44px;background:#fff"></div>
<div class="hsep" style="left:0;top:81px;width:368px;background:#e4e4e4"></div>
<svg class="i" style="left:16px;top:51.5px;stroke:#9a9a9a;stroke-width:1.1;" width="15" height="15" viewBox="0 0 15 15"><circle cx="6" cy="6" r="5.2"/><path d="M9.8 9.8L14.4 14.4"/></svg>
<span class="t" style="left:40.5px;top:51.5px;font-size:12px;line-height:16px;color:#707070;letter-spacing:-0.195px;">Filter</span>
<svg class="i" style="left:321px;top:53px;stroke:#333;stroke-width:1.1;" width="14" height="12" viewBox="0 0 14 12"><path d="M0.6 0.6c0.4 5 3.4 7.4 12 7.4M9.4 4.6L13 8L9.4 11.4"/></svg>
<svg class="i" style="left:339.7px;top:56.8px;stroke:#333;stroke-width:1.1;" width="8.6" height="4.4" viewBox="0 0 8.6 4.4"><path d="M0 0L4.3 4.4L8.6 0"/></svg>
<div class="box" style="left:360px;top:82px;width:8px;height:927px;background:#fff"></div>
<div class="box" style="left:360px;top:82px;width:8px;height:352px;background:#a3a3a3"></div>
<section class="sec" style="top:98px;height:108px"></section>
<div class="tog" style="top:108px"></div>
<svg class="i" style="left:12.0px;top:114.4px;stroke:#fff;stroke-width:1.4;" width="8" height="4.2" viewBox="0 0 8 4.2"><path d="M0 0L4.0 4.2L8 0"/></svg>
<span class="t" style="left:30.0px;top:107.3px;font-size:15px;line-height:18px;color:#2a2a2a;letter-spacing:-0.017px;-webkit-text-stroke:0.3px #2a2a2a;">Identification</span>
<span class="t" style="left:8.2px;top:147.3px;font-size:12px;line-height:16px;color:#383838;letter-spacing:-0.047px;">Title</span>
<span class="t" style="left:124.2px;top:147.3px;font-size:12px;line-height:16px;color:#555;letter-spacing:-0.220px;transform-origin:0 50%;transform:scaleX(0.9702);">Example</span>
<div class="ul" style="left:124px;top:164.5px;width:224px"></div>
<span class="t" style="left:8.2px;top:179.0px;font-size:12px;line-height:16px;color:#383838;letter-spacing:-0.220px;transform-origin:0 50%;transform:scaleX(0.9946);">Type</span>
<span class="t" style="left:124.2px;top:179.0px;font-size:12px;line-height:16px;color:#383838;letter-spacing:-0.086px;">Interactive Grid</span>
<div class="ul" style="left:124px;top:197px;width:184px"></div>
<svg class="i" style="left:291.2px;top:183.95px;stroke:#363636;stroke-width:1.2;" width="8.6" height="4.5" viewBox="0 0 8.6 4.5"><path d="M0 0L4.3 4.5L8.6 0"/></svg>
<div class="lb" style="left:320px;top:174.0px;"></div>
<svg class="i" style="left:328.2px;top:179.1px;stroke:#2e2e2e;stroke-width:1.15;" width="15" height="13" viewBox="0 0 15 13"><g fill="#383838" stroke="none"><circle cx="1.3" cy="1.4" r="1.4"/><circle cx="1.3" cy="6.4" r="1.4"/><circle cx="1.3" cy="11.4" r="1.4"/></g><path d="M5.6 1.4H14.2M5.6 6.4H14.2M5.6 11.4H14.2"/></svg>
<section class="sec" style="top:221px;height:276px"></section>
<div class="tog" style="top:231px"></div>
<svg class="i" style="left:12.0px;top:237.4px;stroke:#fff;stroke-width:1.4;" width="8" height="4.2" viewBox="0 0 8 4.2"><path d="M0 0L4.0 4.2L8 0"/></svg>
<span class="t" style="left:30.0px;top:230.3px;font-size:15px;line-height:18px;color:#2a2a2a;letter-spacing:-0.220px;-webkit-text-stroke:0.3px #2a2a2a;transform-origin:0 50%;transform:scaleX(0.9305);">Source</span>
<span class="t" style="left:8.2px;top:270.3px;font-size:12px;line-height:16px;color:#383838;letter-spacing:-0.134px;">Location</span>
<span class="t" style="left:124.2px;top:270.3px;font-size:12px;line-height:16px;color:#383838;letter-spacing:-0.220px;transform-origin:0 50%;transform:scaleX(0.9862);">Local Database</span>
<div class="ul" style="left:124px;top:288px;width:224px"></div>
<svg class="i" style="left:331.7px;top:275.25px;stroke:#363636;stroke-width:1.2;" width="8.6" height="4.5" viewBox="0 0 8.6 4.5"><path d="M0 0L4.3 4.5L8.6 0"/></svg>
<span class="t" style="left:8.2px;top:302.3px;font-size:12px;line-height:16px;color:#383838;letter-spacing:-0.220px;transform-origin:0 50%;transform:scaleX(0.9946);">Type</span>
<span class="t" style="left:124.2px;top:302.3px;font-size:12px;line-height:16px;color:#383838;letter-spacing:-0.220px;transform-origin:0 50%;transform:scaleX(0.9723);">SQL Query</span>
<div class="ul" style="left:124px;top:320px;width:224px"></div>
<svg class="i" style="left:331.7px;top:307.25px;stroke:#363636;stroke-width:1.2;" width="8.6" height="4.5" viewBox="0 0 8.6 4.5"><path d="M0 0L4.3 4.5L8.6 0"/></svg>
<span class="t" style="left:8.2px;top:334.3px;font-size:12px;line-height:16px;color:#383838;letter-spacing:-0.220px;transform-origin:0 50%;transform:scaleX(0.9723);">SQL Query</span>
<svg class="i" style="left:328.5px;top:334px;stroke:#333;stroke-width:1.1;stroke-linecap:butt;stroke-linejoin:miter;" width="15" height="14" viewBox="0 0 15 14"><path d="M2.8 4.3V0.55H13.6V11.4H9.1"/><path d="M0.7 13.5L7 7.7M1.5 7.7H7V12.7"/></svg>
<div class="box" style="left:8px;top:357px;width:344px;height:51.5px;background:#fff;border:1px solid #d9d9d9;border-radius:1px"></div>
<span class="t" style="left:13.4px;top:363.6px;font-size:10px;line-height:12px;color:#333;letter-spacing:0.030px;font-family:'Liberation Mono',monospace;">select * from IG_CHECKBOX_PLUGIN</span>
<div class="abs" style="left:321px;top:378px;width:22px;height:22px;border-radius:50%;background:#15c39a"></div>
<svg class="i" style="left:325px;top:382px;stroke:#eafff9;stroke-width:1.6;" width="14" height="14" viewBox="0 0 14 14"><path d="M10.9 3.2A5.4 5.4 0 1 0 12 9.4"/><path d="M8.4 9.2H12.6V5.8" stroke-width="1.4"/></svg>
<svg class="i" style="left:342px;top:398.6px;stroke:#555;stroke-width:0.9;" width="8" height="8" viewBox="0 0 8 8"><path d="M7.8 0.4L0.4 7.8M7.8 4.4L4.4 7.8"/></svg>
<span class="t" style="left:8.2px;top:422.3px;font-size:12px;line-height:16px;color:#383838;letter-spacing:-0.127px;">Page Items to</span>
<span class="t" style="left:8.2px;top:438.0px;font-size:12px;line-height:16px;color:#383838;letter-spacing:-0.027px;">Submit</span>
<div class="ul" style="left:124px;top:448px;width:184px"></div>
<div class="lb" style="left:320px;top:425.0px;"></div>
<svg class="i" style="left:328.2px;top:430.1px;stroke:#2e2e2e;stroke-width:1.15;" width="15" height="13" viewBox="0 0 15 13"><g fill="#383838" stroke="none"><circle cx="1.3" cy="1.4" r="1.4"/><circle cx="1.3" cy="6.4" r="1.4"/><circle cx="1.3" cy="11.4" r="1.4"/></g><path d="M5.6 1.4H14.2M5.6 6.4H14.2M5.6 11.4H14.2"/></svg>
<span class="t" style="left:8.2px;top:470.3px;font-size:12px;line-height:16px;color:#383838;letter-spacing:0.127px;">Optimizer Hint</span>
<div class="ul" style="left:124px;top:488px;width:224px"></div>
<section class="sec" style="top:512px;height:316px"></section>
<div class="tog" style="top:522px"></div>
<svg class="i" style="left:12.0px;top:528.4px;stroke:#fff;stroke-width:1.4;" width="8" height="4.2" viewBox="0 0 8 4.2"><path d="M0 0L4.0 4.2L8 0"/></svg>
<span class="t" style="left:30.0px;top:521.3px;font-size:15px;line-height:18px;color:#2a2a2a;letter-spacing:-0.220px;-webkit-text-stroke:0.3px #2a2a2a;transform-origin:0 50%;transform:scaleX(0.9765);">Layout</span>
<span class="t" style="left:8.2px;top:561.0px;font-size:12px;line-height:16px;color:#383838;letter-spacing:-0.220px;transform-origin:0 50%;transform:scaleX(0.9697);">Sequence</span>
<span class="t" style="left:124.2px;top:561.0px;font-size:12px;line-height:16px;color:#555;letter-spacing:-0.220px;transform-origin:0 50%;transform:scaleX(0.9521);">20</span>
<div class="ul" style="left:124px;top:579px;width:224px"></div>
<span class="t" style="left:8.2px;top:593.0px;font-size:12px;line-height:16px;color:#383838;letter-spacing:-0.178px;">Parent Region</span>
<span class="t" style="left:124.9px;top:593.0px;font-size:12px;line-height:16px;color:#383838;letter-spacing:-0.182px;">- Select -</span>
<div class="ul" style="left:124px;top:611px;width:184px"></div>
<svg class="i" style="left:291.2px;top:597.95px;stroke:#363636;stroke-width:1.2;" width="8.6" height="4.5" viewBox="0 0 8.6 4.5"><path d="M0 0L4.3 4.5L8.6 0"/></svg>
<div class="lb" style="left:320px;top:588.0px;border-color:#e8e8e8;"></div>
<svg class="i" style="left:333.6px;top:595.2px;stroke:#c4c4c4;stroke-width:1.1;" width="4.8" height="9.6" viewBox="0 0 4.8 9.6"><path d="M0 0L4.8 4.8L0 9.6"/></svg>
<span class="t" style="left:8.2px;top:625.0px;font-size:12px;line-height:16px;color:#383838;letter-spacing:-0.088px;">Position</span>
<span class="t" style="left:124.2px;top:625.0px;font-size:12px;line-height:16px;color:#383838;letter-spacing:-0.035px;">Content Body</span>
<div class="ul" style="left:124px;top:643px;width:184px"></div>
<svg class="i" style="left:291.2px;top:629.95px;stroke:#363636;stroke-width:1.2;" width="8.6" height="4.5" viewBox="0 0 8.6 4.5"><path d="M0 0L4.3 4.5L8.6 0"/></svg>
<div class="lb" style="left:320px;top:620.0px;"></div>
<svg class="i" style="left:328.2px;top:625.1px;stroke:#2e2e2e;stroke-width:1.15;" width="15" height="13" viewBox="0 0 15 13"><g fill="#383838" stroke="none"><circle cx="1.3" cy="1.4" r="1.4"/><circle cx="1.3" cy="6.4" r="1.4"/><circle cx="1.3" cy="11.4" r="1.4"/></g><path d="M5.6 1.4H14.2M5.6 6.4H14.2M5.6 11.4H14.2"/></svg>
<span class="t" style="left:8.2px;top:657.0px;font-size:12px;line-height:16px;color:#383838;letter-spacing:-0.172px;">Start New Row</span>
<div class="abs" style="left:120px;top:652px;width:44px;height:24px;border-radius:12px;background:#0572ce"></div>
<div class="abs" style="left:142px;top:654px;width:20px;height:20px;border-radius:50%;background:#fff"></div>
<span class="t" style="left:8.2px;top:689.0px;font-size:12px;line-height:16px;color:#383838;letter-spacing:-0.060px;">Column</span>
<span class="t" style="left:124.2px;top:689.0px;font-size:12px;line-height:16px;color:#383838;letter-spacing:-0.220px;transform-origin:0 50%;transform:scaleX(0.9277);">2</span>
<div class="ul" style="left:124px;top:707px;width:224px"></div>
<svg class="i" style="left:331.7px;top:693.95px;stroke:#363636;stroke-width:1.2;" width="8.6" height="4.5" viewBox="0 0 8.6 4.5"><path d="M0 0L4.3 4.5L8.6 0"/></svg>
<span class="t" style="left:8.2px;top:721.0px;font-size:12px;line-height:16px;color:#383838;letter-spacing:-0.220px;transform-origin:0 50%;transform:scaleX(0.9986);">Column Span</span>
<span class="t" style="left:124.2px;top:721.0px;font-size:12px;line-height:16px;color:#383838;letter-spacing:-0.220px;transform-origin:0 50%;transform:scaleX(0.9521);">10</span>
<div class="ul" style="left:124px;top:739px;width:224px"></div>
<svg class="i" style="left:331.7px;top:725.95px;stroke:#363636;stroke-width:1.2;" width="8.6" height="4.5" viewBox="0 0 8.6 4.5"><path d="M0 0L4.3 4.5L8.6 0"/></svg>
<span class="t" style="left:8.2px;top:753.3px;font-size:12px;line-height:16px;color:#383838;letter-spacing:-0.220px;transform-origin:0 50%;transform:scaleX(0.9574);">Column CSS</span>
<span class="t" style="left:8.2px;top:769.0px;font-size:12px;line-height:16px;color:#383838;letter-spacing:-0.220px;transform-origin:0 50%;transform:scaleX(0.9089);">Classes</span>
<div class="ul" style="left:124px;top:779px;width:184px"></div>
<div class="lb" style="left:320px;top:756.0px;"></div>
<svg class="i" style="left:328.2px;top:761.1px;stroke:#2e2e2e;stroke-width:1.15;" width="15" height="13" viewBox="0 0 15 13"><g fill="#383838" stroke="none"><circle cx="1.3" cy="1.4" r="1.4"/><circle cx="1.3" cy="6.4" r="1.4"/><circle cx="1.3" cy="11.4" r="1.4"/></g><path d="M5.6 1.4H14.2M5.6 6.4H14.2M5.6 11.4H14.2"/></svg>
<span class="t" style="left:8.2px;top:801.3px;font-size:12px;line-height:16px;color:#383838;letter-spacing:0.105px;">Column Attributes</span>
<div class="ul" style="left:124px;top:819px;width:184px"></div>
<div class="lb" style="left:320px;top:796.0px;"></div>
<svg class="i" style="left:328.2px;top:801.1px;stroke:#2e2e2e;stroke-width:1.15;" width="15" height="13" viewBox="0 0 15 13"><g fill="#383838" stroke="none"><circle cx="1.3" cy="1.4" r="1.4"/><circle cx="1.3" cy="6.4" r="1.4"/><circle cx="1.3" cy="11.4" r="1.4"/></g><path d="M5.6 1.4H14.2M5.6 6.4H14.2M5.6 11.4H14.2"/></svg>
<section class="sec" style="top:843px;height:166px"></section>
<div class="tog" style="top:853px"></div>
<svg class="i" style="left:12.0px;top:859.4px;stroke:#fff;stroke-width:1.4;" width="8" height="4.2" viewBox="0 0 8 4.2"><path d="M0 0L4.0 4.2L8 0"/></svg>
<span class="t" style="left:30.0px;top:852.3px;font-size:15px;line-height:18px;color:#2a2a2a;letter-spacing:-0.220px;-webkit-text-stroke:0.3px #2a2a2a;transform-origin:0 50%;transform:scaleX(0.9618);">Appearance</span>
<span class="t" style="left:8.2px;top:892.0px;font-size:12px;line-height:16px;color:#383838;letter-spacing:0.012px;">Template</span>
<span class="t" style="left:124.2px;top:892.0px;font-size:12px;line-height:16px;color:#383838;letter-spacing:-0.012px;">Interactive Report</span>
<div class="ul" style="left:124px;top:910px;width:184px"></div>
<svg class="i" style="left:291.2px;top:896.95px;stroke:#363636;stroke-width:1.2;" width="8.6" height="4.5" viewBox="0 0 8.6 4.5"><path d="M0 0L4.3 4.5L8.6 0"/></svg>
<div class="lb" style="left:320px;top:887.5px;"></div>
<svg class="i" style="left:333.6px;top:894.7px;stroke:#333;stroke-width:1.1;" width="4.8" height="9.6" viewBox="0 0 4.8 9.6"><path d="M0 0L4.8 4.8L0 9.6"/></svg>
<span class="t" style="left:8.2px;top:926.3px;font-size:12px;line-height:16px;color:#383838;letter-spacing:0.038px;">Template Options</span>
<div class="btn" style="left:120px;top:919px;width:232px;height:28px;"></div>
<span class="t" style="left:177.0px;top:925.8px;font-size:12px;line-height:16px;color:#383838;letter-spacing:-0.120px;">Use Template Defaults</span>
<span class="t" style="left:8.2px;top:960.3px;font-size:12px;line-height:16px;color:#383838;letter-spacing:-0.220px;transform-origin:0 50%;transform:scaleX(0.8935);">CSS Classes</span>
<div class="ul" style="left:124px;top:978px;width:184px"></div>
<div class="lb" style="left:320px;top:955.0px;"></div>
<svg class="i" style="left:328.2px;top:960.1px;stroke:#2e2e2e;stroke-width:1.15;" width="15" height="13" viewBox="0 0 15 13"><g fill="#383838" stroke="none"><circle cx="1.3" cy="1.4" r="1.4"/><circle cx="1.3" cy="6.4" r="1.4"/><circle cx="1.3" cy="11.4" r="1.4"/></g><path d="M5.6 1.4H14.2M5.6 6.4H14.2M5.6 11.4H14.2"/></svg>
<span class="t" style="left:8.2px;top:992.3px;font-size:12px;line-height:16px;color:#383838;letter-spacing:-0.172px;">Icon</span>
<div class="lb" style="left:320px;top:987.0px;"></div>
<svg class="i" style="left:328.2px;top:992.1px;stroke:#2e2e2e;stroke-width:1.15;" width="15" height="13" viewBox="0 0 15 13"><g fill="#383838" stroke="none"><circle cx="1.3" cy="1.4" r="1.4"/><circle cx="1.3" cy="6.4" r="1.4"/><circle cx="1.3" cy="11.4" r="1.4"/></g><path d="M5.6 1.4H14.2M5.6 6.4H14.2M5.6 11.4H14.2"/></svg>
</aside>
</body>
</html>
